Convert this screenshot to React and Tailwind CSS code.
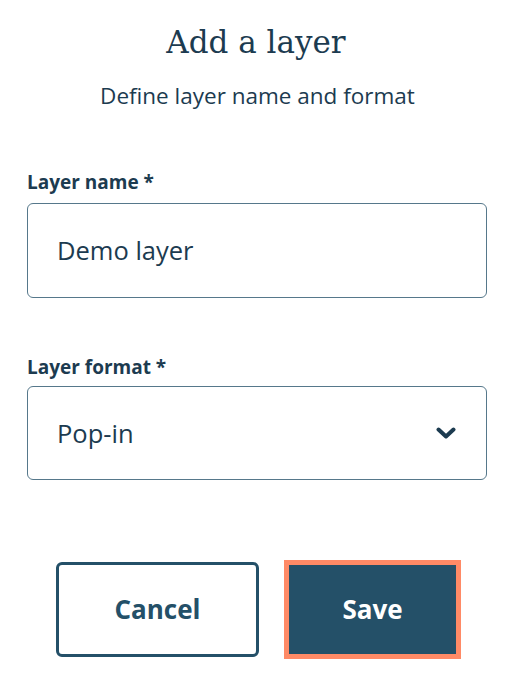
export default function App() {
    return (
        <div className="w-[512px] h-[673px] bg-white flex flex-col text-[#1c3b50]" style={{ fontFamily: '"Open Sans", "Noto Sans", sans-serif' }}>
            <div className="flex flex-col items-center">
                <h1 className="mt-[22px] text-[31px] leading-[40px]" style={{ fontFamily: '"DejaVu Serif", serif' }}>
                    Add a layer
                </h1>
                <p className="mt-[20px] text-[22.5px] leading-[28px] pl-[3px]">Define layer name and format</p>
            </div>

            <div className="pl-[27px] pr-[25px] flex flex-col">
                <label className="mt-[60px] text-[19px] leading-[24px] font-bold">Layer name *</label>
                <div className="mt-[9px] h-[95px] rounded-[6px] border border-[#56788b] flex items-center px-[29px] text-[25.5px]">
                    Demo layer
                </div>

                <label className="mt-[57px] text-[19px] leading-[24px] font-bold">Layer format *</label>
                <div className="mt-[7px] h-[94px] rounded-[6px] border border-[#56788b] flex items-center justify-between pl-[29px] pr-[30px] text-[25.5px]">
                    <span>Pop-in</span>
                    <svg width="20" height="12" viewBox="0 0 20 12" fill="none">
                        <path d="M2.5 2.5 L10 9.5 L17.5 2.5" stroke="#1c3b50" strokeWidth="4" strokeLinecap="round" strokeLinejoin="round" />
                    </svg>
                </div>
            </div>

            <div className="mt-[80px] flex items-center gap-[25px] pl-[56px]">
                <button className="w-[203px] h-[95px] rounded-[6px] border-[3px] border-[#245068] text-[#245068] text-[26px] font-bold">
                    Cancel
                </button>
                <button className="w-[177px] h-[99px] border-[5px] border-[#ff8a66] bg-[#245068] text-white text-[26px] font-bold">
                    Save
                </button>
            </div>
        </div>
    );
}
